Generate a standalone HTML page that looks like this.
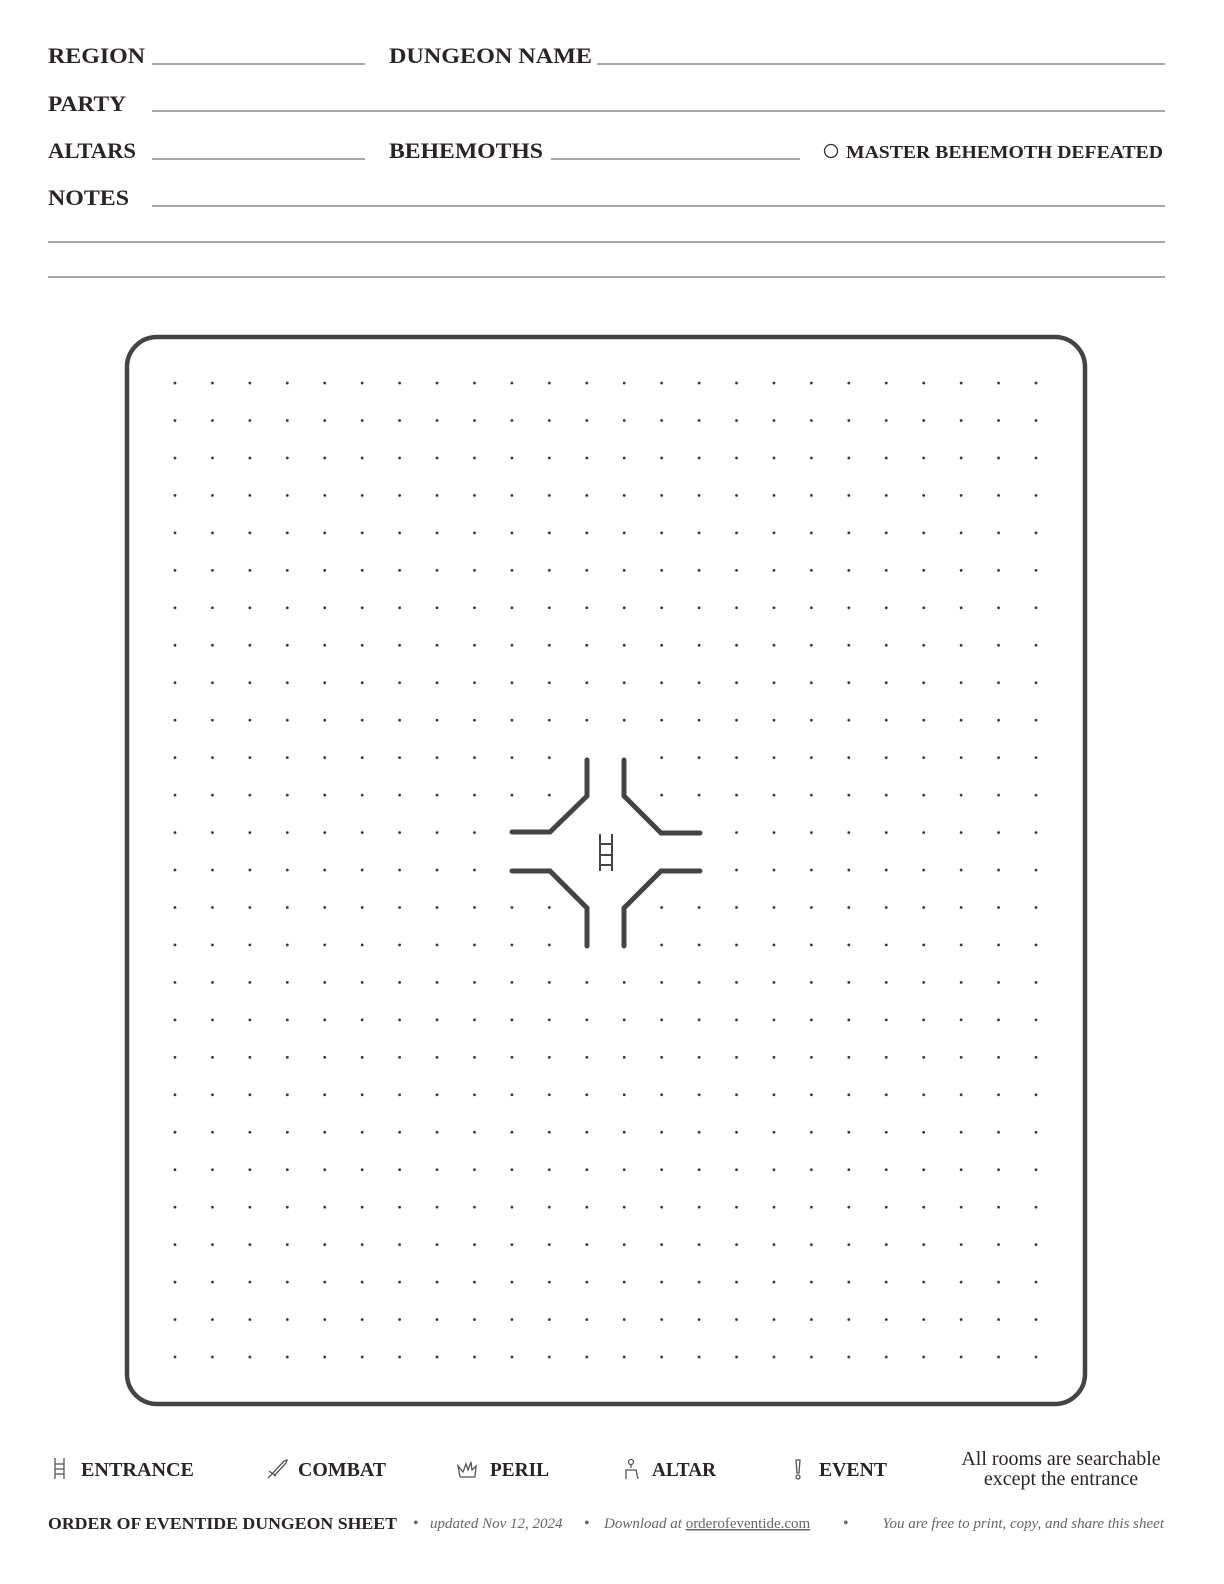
<!DOCTYPE html>
<html><head><meta charset="utf-8"><style>
html,body{margin:0;padding:0;background:#fff;overflow:hidden;width:1224px;height:1584px;}
svg{display:block;position:absolute;left:0;top:0;}
</style></head><body>
<svg width="1224" height="1584" viewBox="0 0 1224 1584" xmlns="http://www.w3.org/2000/svg">
<defs>
<pattern id="dots" x="156.3" y="364.3" width="37.435" height="37.46" patternUnits="userSpaceOnUse">
<circle cx="18.7" cy="18.7" r="1.4" fill="#333"/>
</pattern>
</defs>
<g font-family="'Liberation Serif', serif" font-weight="bold" fill="#2b2323" font-size="22">
<text x="48" y="63" textLength="97" lengthAdjust="spacingAndGlyphs">REGION</text>
<text x="389" y="63" textLength="203" lengthAdjust="spacingAndGlyphs">DUNGEON NAME</text>
<text x="48" y="111" textLength="78" lengthAdjust="spacingAndGlyphs">PARTY</text>
<text x="48" y="158" textLength="88" lengthAdjust="spacingAndGlyphs">ALTARS</text>
<text x="389" y="158" textLength="154" lengthAdjust="spacingAndGlyphs">BEHEMOTHS</text>
<text x="846" y="158" font-size="18" textLength="317" lengthAdjust="spacingAndGlyphs">MASTER BEHEMOTH DEFEATED</text>
<text x="48" y="205" textLength="81" lengthAdjust="spacingAndGlyphs">NOTES</text>
</g>
<circle cx="831" cy="151" r="6.5" fill="none" stroke="#333" stroke-width="1.3"/>
<g stroke="#8a8a8a" stroke-width="1.6">
<line x1="152" y1="64" x2="365" y2="64"/>
<line x1="597" y1="64" x2="1165" y2="64"/>
<line x1="152" y1="111" x2="1165" y2="111"/>
<line x1="152" y1="159" x2="365" y2="159"/>
<line x1="551" y1="159" x2="800" y2="159"/>
<line x1="152" y1="206" x2="1165" y2="206"/>
<line x1="48" y1="242" x2="1165" y2="242"/>
<line x1="48" y1="277" x2="1165" y2="277"/>
</g>
<rect x="158" y="366" width="896" height="1010" fill="url(#dots)"/>
<rect x="570" y="745" width="72" height="212" fill="#fff"/>
<rect x="495" y="815" width="222" height="72" fill="#fff"/>
<rect x="127" y="337" width="958" height="1067" rx="30" ry="30" fill="none" stroke="#444" stroke-width="4.5"/>
<g stroke="#444" stroke-width="5" fill="none" stroke-linecap="round" stroke-linejoin="miter">
<polyline points="587,760 587,796 550,832 512,832"/>
<polyline points="624,760 624,796 661,833 700,833"/>
<polyline points="512,871 550,871 587,908 587,946"/>
<polyline points="700,871 661,871 624,908 624,946"/>
</g>
<g stroke="#444" stroke-width="2" fill="none">
<line x1="600" y1="834" x2="600" y2="871"/><line x1="612" y1="834" x2="612" y2="871"/>
<line x1="600" y1="844" x2="612" y2="844"/><line x1="600" y1="855" x2="612" y2="855"/><line x1="600" y1="865" x2="612" y2="865"/>
</g>
<g font-family="'Liberation Serif', serif" font-weight="bold" fill="#2b2323" font-size="20">
<text x="81" y="1476" textLength="113" lengthAdjust="spacingAndGlyphs">ENTRANCE</text>
<text x="298" y="1476" textLength="88" lengthAdjust="spacingAndGlyphs">COMBAT</text>
<text x="490" y="1476" textLength="59" lengthAdjust="spacingAndGlyphs">PERIL</text>
<text x="652" y="1476" textLength="64" lengthAdjust="spacingAndGlyphs">ALTAR</text>
<text x="819" y="1476" textLength="68" lengthAdjust="spacingAndGlyphs">EVENT</text>
</g>
<g font-family="'Liberation Serif', serif" fill="#2b2323" font-size="20" text-anchor="middle">
<text x="1061" y="1465">All rooms are searchable</text>
<text x="1061" y="1485">except the entrance</text>
</g>
<g stroke="#555" stroke-width="1.3" fill="none">
<line x1="55" y1="1458" x2="55" y2="1479"/><line x1="64" y1="1458" x2="64" y2="1479"/>
<line x1="55" y1="1464" x2="64" y2="1464"/><line x1="55" y1="1469" x2="64" y2="1469"/><line x1="55" y1="1474" x2="64" y2="1474"/>
<path d="M268 1478 L272 1474 M269 1471 L276 1476 M272 1474 L284 1461 L287 1460 L286 1463 L274 1476"/>
<path d="M460 1477 L475 1477 M460 1477 L458 1466 L463 1472 L466 1464 L468 1470 L471 1462 L472 1470 L476 1466 L475 1477"/>
<circle cx="631" cy="1462" r="2.5"/>
<path d="M631 1465 L631 1468 M626 1479 L626 1470 L636 1470 L638 1479"/>
<path d="M796 1460 L800 1460 L799 1473 L797 1473 Z"/><circle cx="798" cy="1477" r="2"/>
</g>
<g font-family="'Liberation Serif', serif" fill="#2b2323" font-size="16">
<text x="48" y="1529" font-weight="bold" font-size="17" textLength="349" lengthAdjust="spacingAndGlyphs">ORDER OF EVENTIDE DUNGEON SHEET</text>
<text x="413" y="1528" fill="#666">•</text>
<text x="430" y="1528" font-style="italic" fill="#666" font-size="15">updated Nov 12, 2024</text>
<text x="584" y="1528" fill="#666">•</text>
<text x="604" y="1528" font-style="italic" fill="#666" font-size="15">Download at <tspan text-decoration="underline" font-style="normal">orderofeventide.com</tspan></text>
<text x="843" y="1528" fill="#666">•</text>
<text x="1164" y="1528" font-style="italic" fill="#666" font-size="15" text-anchor="end">You are free to print, copy, and share this sheet</text>
</g>
</svg>
</body></html>
